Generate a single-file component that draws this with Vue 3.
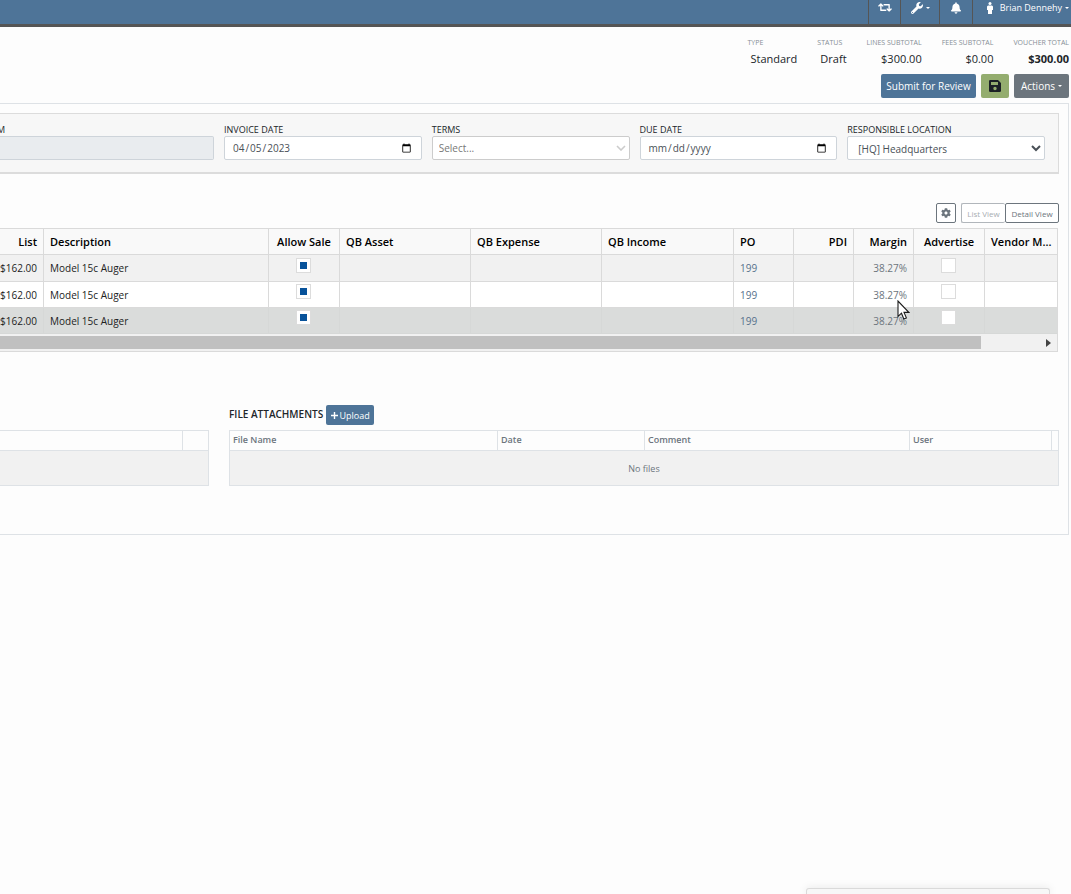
<script setup>
import { ref } from 'vue'

const invoiceDate = ref('2023-04-05')
const dueDate = ref('')

const totals = [
  { label: 'TYPE', value: 'Standard', cls: 'type' },
  { label: 'STATUS', value: 'Draft', cls: 'status' },
  { label: 'LINES SUBTOTAL', value: '$300.00', cls: 'lines' },
  { label: 'FEES SUBTOTAL', value: '$0.00', cls: 'fees' },
  { label: 'VOUCHER TOTAL', value: '$300.00', cls: 'voucher' },
]

const columns = [
  { key: 'list', title: 'List', cls: 'right' },
  { key: 'description', title: 'Description', cls: '' },
  { key: 'allow', title: 'Allow Sale', cls: 'center' },
  { key: 'asset', title: 'QB Asset', cls: '' },
  { key: 'expense', title: 'QB Expense', cls: '' },
  { key: 'income', title: 'QB Income', cls: '' },
  { key: 'po', title: 'PO', cls: 'link' },
  { key: 'pdi', title: 'PDI', cls: 'right' },
  { key: 'margin', title: 'Margin', cls: 'right muted' },
  { key: 'advertise', title: 'Advertise', cls: 'center' },
  { key: 'vendor', title: 'Vendor M...', cls: '' },
]

const line = { list: '$162.00', description: 'Model 15c Auger', allow: true, po: '199', margin: '38.27%', advertise: false }
const rows = ref([1, 2, 3].map((id) => ({ id, ...line })))
</script>

<template>
  <div class="page">
    <header class="topbar">
      <button class="nav swap" aria-label="Switch">
        <svg width="14" height="11" viewBox="0 0 640 512"><path fill="#fff" d="M629.657 343.598L528.971 444.284c-9.373 9.372-24.568 9.372-33.941 0L394.343 343.598c-9.373-9.373-9.373-24.569 0-33.941l10.823-10.823c9.562-9.562 25.133-9.340 34.419.492L480 342.118V160H292.451a24.005 24.005 0 0 1-16.971-7.029l-16-16C244.361 121.851 255.069 96 276.451 96H520c13.255 0 24 10.745 24 24v222.118l40.416-42.792c9.285-9.831 24.856-10.054 34.419-.492l10.823 10.823c9.372 9.372 9.372 24.569-.001 33.941zm-265.138 15.431A23.999 23.999 0 0 0 347.548 352H160V169.881l40.416 42.792c9.286 9.831 24.856 10.054 34.419.491l10.822-10.822c9.373-9.373 9.373-24.569 0-33.941L144.971 67.716c-9.373-9.373-24.569-9.373-33.941 0L10.343 168.402c-9.373 9.373-9.373 24.569 0 33.941l10.822 10.822c9.562 9.562 25.133 9.340 34.419-.491L96 169.881V392c0 13.255 10.745 24 24 24h243.549c21.382 0 32.090-25.851 16.970-40.971l-16-16z" /></svg>
      </button>
      <button class="nav tools" aria-label="Tools">
        <svg width="12" height="12" viewBox="0 0 512 512"><path fill="#fff" d="M507.730 109.100c-2.240-9.030-13.540-12.090-20.120-5.510l-74.360 74.360-67.880-11.310-11.310-67.880 74.360-74.360c6.620-6.620 3.430-17.900-5.660-20.160-47.380-11.740-99.550.91-136.580 37.930-39.640 39.640-50.550 97.100-34.050 147.200L18.740 402.760c-24.990 24.990-24.990 65.510 0 90.500 24.990 24.990 65.510 24.990 90.500 0l213.210-213.210c50.120 16.710 107.470 5.680 147.370-34.220 37.070-37.070 49.700-89.320 37.910-136.730zM64 472c-13.250 0-24-10.750-24-24 0-13.260 10.750-24 24-24s24 10.740 24 24c0 13.250-10.750 24-24 24z" /></svg>
        <i class="caret"></i>
      </button>
      <button class="nav bell" aria-label="Notifications">
        <svg width="10" height="12" viewBox="0 0 448 512"><path fill="#fff" d="M224 512c35.320 0 63.970-28.650 63.970-64H160.030c0 35.350 28.650 64 63.970 64zm215.390-149.710c-19.320-20.760-55.470-51.990-55.470-154.290 0-77.700-54.480-139.900-127.940-155.160V32c0-17.670-14.320-32-31.980-32s-31.980 14.330-31.980 32v20.840C118.560 68.100 64.080 130.300 64.080 208c0 102.300-36.150 133.530-55.470 154.290-6 6.450-8.660 14.160-8.610 21.710.11 16.400 12.980 32 32.100 32h383.800c19.120 0 32-15.600 32.100-32 .05-7.550-2.610-15.270-8.610-21.710z" /></svg>
      </button>
      <button class="nav user">
        <svg width="6" height="12" viewBox="0 0 6 12"><circle cx="3" cy="1.500" r="1.500" fill="#fff" /><path d="M1 3.400h4l1 1V8H5v4H1V8H0V4.400z" fill="#fff" /></svg>
        <span>Brian Dennehy</span>
        <i class="caret"></i>
      </button>
    </header>

    <dl class="totals">
      <div v-for="t in totals" :key="t.label" :class="t.cls">
        <dt>{{ t.label }}</dt>
        <dd>{{ t.value }}</dd>
      </div>
    </dl>

    <div class="actions">
      <button class="btn primary">Submit for Review</button>
      <button class="btn save" aria-label="Save">
        <svg width="12" height="12" viewBox="0 0 12 12"><path fill="#1c2126" fill-rule="evenodd" d="M1.300 0H9l3 3v7.700a1.300 1.300 0 0 1-1.300 1.300H1.300A1.300 1.300 0 0 1 0 10.700V1.300A1.300 1.300 0 0 1 1.300 0zM2 2v3h7V2zM6 6.800a1.700 1.700 0 1 0 0 3.400 1.700 1.700 0 0 0 0-3.400z" /></svg>
      </button>
      <button class="btn gray">Actions <i class="caret"></i></button>
    </div>

    <main class="panel">
      <form class="card" @submit.prevent>
        <div class="field">
          <label class="cut" for="memo">M</label>
          <input id="memo" class="control locked" type="text" disabled />
        </div>
        <div class="field">
          <label for="invoice">INVOICE DATE</label>
          <input id="invoice" v-model="invoiceDate" class="control" type="date" />
        </div>
        <div class="field">
          <label for="terms">TERMS</label>
          <div class="pick">
            <select id="terms" class="control terms"><option>Select...</option></select>
            <svg width="10" height="6" viewBox="0 0 10 6"><path d="M1 1l4 4 4-4" fill="none" stroke="#ccc" stroke-width="1.600" /></svg>
          </div>
        </div>
        <div class="field">
          <label for="due">DUE DATE</label>
          <input id="due" v-model="dueDate" class="control" type="date" />
        </div>
        <div class="field">
          <label for="location">RESPONSIBLE LOCATION</label>
          <div class="pick">
            <select id="location" class="control location"><option>[HQ] Headquarters</option></select>
            <svg width="10" height="7" viewBox="0 0 10 7"><path d="M1 1l4 4 4-4" fill="none" stroke="#495057" stroke-width="2" /></svg>
          </div>
        </div>
      </form>

      <div class="views">
        <button class="view gear" aria-label="Settings">
          <svg width="10" height="10" viewBox="0 0 512 512"><path fill="#6c757d" d="M487.400 315.700l-42.600-24.600c4.300-23.200 4.300-47 0-70.200l42.600-24.600c4.900-2.800 7.100-8.600 5.500-14-11.100-35.600-30-67.800-54.700-94.600-3.800-4.100-10-5.100-14.800-2.300L380.800 110c-17.900-15.400-38.500-27.300-60.800-35.100V25.800c0-5.600-3.900-10.500-9.400-11.700-36.700-8.200-74.300-7.800-109.200 0-5.500 1.200-9.400 6.100-9.400 11.700V75c-22.200 7.900-42.800 19.800-60.800 35.100L88.700 85.500c-4.900-2.800-11-1.900-14.800 2.300-24.700 26.700-43.600 58.900-54.700 94.600-1.700 5.400.6 11.200 5.500 14L67.300 221c-4.300 23.200-4.300 47 0 70.200l-42.600 24.600c-4.900 2.800-7.100 8.600-5.500 14 11.100 35.600 30 67.800 54.700 94.600 3.800 4.100 10 5.100 14.800 2.300l42.600-24.600c17.900 15.400 38.500 27.300 60.800 35.100v49.200c0 5.600 3.900 10.500 9.400 11.700 36.700 8.200 74.300 7.800 109.200 0 5.500-1.200 9.400-6.100 9.400-11.700v-49.200c22.200-7.900 42.800-19.800 60.800-35.100l42.600 24.600c4.900 2.800 11 1.900 14.800-2.300 24.700-26.700 43.600-58.900 54.700-94.600 1.500-5.500-.7-11.300-5.600-14.100zM256 336c-44.100 0-80-35.900-80-80s35.900-80 80-80 80 35.900 80 80-35.900 80-80 80z" /></svg>
        </button>
        <div class="group">
          <button class="view off" disabled>List View</button>
          <button class="view">Detail View</button>
        </div>
      </div>

      <section class="gridwrap">
        <table class="lines-table">
          <colgroup><col v-for="c in columns" :key="c.key" :class="'c-' + c.key" /></colgroup>
          <thead>
            <tr><th v-for="c in columns" :key="c.key" :class="c.cls">{{ c.title }}</th></tr>
          </thead>
          <tbody>
            <tr v-for="r in rows" :key="r.id">
              <td v-for="c in columns" :key="c.key" :class="c.cls">
                <input v-if="c.key === 'allow' || c.key === 'advertise'" v-model="r[c.key]" type="checkbox" :aria-label="c.title" />
                <a v-else-if="c.key === 'po'" href="#">{{ r.po }}</a>
                <template v-else>{{ r[c.key] }}</template>
              </td>
            </tr>
          </tbody>
        </table>
        <div class="scroller">
          <div class="thumb"></div>
          <button aria-label="Scroll right"><svg width="5" height="8" viewBox="0 0 5 8"><path d="M0 0l5 4-5 4z" fill="#444" /></svg></button>
        </div>
        <svg class="cursor" width="13" height="20" viewBox="0 0 13 20"><path d="M1 1v15.500l3.500-3.300L6.800 19l2.600-1.100-2.400-5.500h4.800z" fill="#fff" stroke="#1a1a1a" stroke-width="1.100" /></svg>
      </section>

      <div class="bottom">
        <section class="notes">
          <table class="files">
            <thead><tr><th></th><th class="tool"></th></tr></thead>
            <tbody><tr><td colspan="2"></td></tr></tbody>
          </table>
        </section>
        <section>
          <div class="heading">
            <h2>FILE ATTACHMENTS</h2>
            <button class="upload"><svg width="7" height="7" viewBox="0 0 7 7"><path d="M3.500 0v7M0 3.500h7" stroke="#fff" stroke-width="1.400" /></svg>Upload</button>
          </div>
          <table class="files">
            <colgroup><col class="f-name" /><col class="f-date" /><col class="f-comment" /><col class="f-user" /><col class="f-end" /></colgroup>
            <thead><tr><th>File Name</th><th>Date</th><th>Comment</th><th>User</th><th></th></tr></thead>
            <tbody><tr><td colspan="5">No files</td></tr></tbody>
          </table>
        </section>
      </div>
    </main>

    <div class="dock"></div>
  </div>
</template>

<style>
body {
  margin: 0;
  background: #fdfdfd;
  overflow-x: hidden;
}
</style>

<style scoped>
* {
  box-sizing: border-box;
}
.page {
  min-height: 100vh;
  font-family: "Open Sans", "Noto Sans", sans-serif;
  font-size: 11px;
  color: #212529;
  overflow: hidden;
}
button,
input,
select {
  font-family: inherit;
  margin: 0;
}
.topbar {
  display: flex;
  justify-content: flex-end;
  height: 27px;
  background: #4e7498;
  border-bottom: 3px solid #555;
}
.nav {
  display: flex;
  align-items: center;
  justify-content: center;
  gap: 3px;
  height: 24px;
  padding: 0 0 9px;
  border: 0;
  border-left: 1px solid #555;
  background: none;
  color: #fff;
  font-size: 9px;
  white-space: nowrap;
}
.swap { width: 32px; }
.tools { width: 39px; }
.bell { width: 33px; }
.user { width: 99px; justify-content: flex-end; padding-right: 2px; }
.user span { margin-left: 4px; }
.caret {
  display: inline-block;
  border: 2px solid transparent;
  border-top-color: currentColor;
  border-bottom: 0;
}
.totals {
  display: flex;
  justify-content: flex-end;
  gap: 20px;
  margin: 0;
  padding: 10px 2px 0 0;
}
dt {
  font-size: 7px;
  line-height: 12px;
  color: #868e96;
}
dd {
  margin: 0;
  font-size: 11px;
  line-height: 19px;
}
.type dd,
.status dd { padding-left: 3px; }
.lines,
.fees,
.voucher { text-align: right; }
.voucher dd { font-weight: 700; }
.actions {
  display: flex;
  justify-content: flex-end;
  gap: 5px;
  padding: 6px 2px 5px 0;
}
.btn {
  display: flex;
  align-items: center;
  justify-content: center;
  gap: 3px;
  height: 24px;
  padding: 0;
  border: 0;
  border-radius: 2px;
  color: #fff;
  font-size: 10px;
}
.primary { width: 95px; background: #4e7498; }
.save { width: 28px; background: #94ad6f; }
.gray { width: 55px; background: #6c757d; }
.panel {
  margin-right: 2px;
  padding: 9px 9px 48px 0;
  border: 1px solid #dee2e6;
  border-left: 0;
}
.card {
  display: grid;
  grid-template-columns: 214px repeat(4, 1fr);
  gap: 10px;
  padding: 10px 13px 12px 0;
  background: #f7f7f7;
  border: 1px solid #dcdcdc;
  border-left: 0;
  border-bottom-width: 2px;
}
.field { min-width: 0; }
label {
  display: block;
  font-size: 9px;
  line-height: 12px;
}
.cut { text-indent: -3px; }
.control {
  display: block;
  width: 100%;
  height: 24px;
  padding: 0 9px 0 7px;
  border: 1px solid #ced4da;
  border-radius: 2px;
  background: #fff;
  color: #495057;
  font-size: 10px;
}
.control::-webkit-calendar-picker-indicator {
  width: 11px;
  height: 11px;
  padding: 0;
}
.locked {
  border-left: 0;
  border-radius: 0 2px 2px 0;
  background: #e9ecef;
}
.pick { position: relative; }
.pick select { appearance: none; }
.pick svg {
  position: absolute;
  right: 4px;
  top: 9px;
  pointer-events: none;
}
.terms { padding: 0 6px; border-color: #ccc; color: #777; }
.location { padding: 2px 10px 0; }
.views {
  display: flex;
  justify-content: flex-end;
  gap: 5px;
  margin: 29px 0 5px;
}
.group { display: flex; }
.view {
  height: 20px;
  padding: 0;
  width: 54px;
  border: 1px solid #6c757d;
  border-radius: 2px;
  background: #fff;
  color: #6c757d;
  font-size: 8px;
}
.gear { width: 20px; }
.gear svg { display: block; margin: auto; }
.off { width: 44px; border-color: #b1b6bb; border-right: 0; color: #a8adb2; }
.gridwrap {
  position: relative;
  margin-right: 1px;
  border: 1px solid #dadada;
  border-left: 0;
}
table {
  width: 100%;
  table-layout: fixed;
  border-collapse: separate;
  border-spacing: 0;
}
.lines-table th,
.lines-table td {
  padding: 0 6px;
  border-right: 1px solid #dadada;
  border-bottom: 1px solid #dadada;
  text-align: left;
  white-space: nowrap;
  overflow: hidden;
}
.lines-table th {
  height: 26px;
  background: #f9f9f9;
  color: #000;
  font-size: 11px;
  font-weight: 600;
}
.lines-table td {
  height: 26px;
  color: #222;
  font-size: 10px;
}
.lines-table tr > :first-child { padding-left: 0; }
.lines-table tr > :last-child { border-right: 0; }
.lines-table tr > .right { text-align: right; }
.lines-table tr > .center { text-align: center; }
.lines-table td.center { padding-right: 7px; }
.lines-table td.muted { color: #6c757d; }
.lines-table tbody tr:nth-child(1) td { height: 27px; background: #f1f1f1; }
.lines-table tbody tr:nth-child(2) td { background: #fff; }
.lines-table tbody tr:nth-child(3) td { background: #dadcdb; border-color: #d6d8d7; }
.lines-table a { color: #56718c; text-decoration: none; }
.c-list { width: 44px; }
.c-description { width: 225px; }
.c-allow,
.c-advertise { width: 71px; }
.c-asset,
.c-expense { width: 131px; }
.c-income { width: 132px; }
.c-po,
.c-pdi,
.c-margin { width: 60px; }
input[type="checkbox"] {
  appearance: none;
  display: block;
  width: 15px;
  height: 15px;
  margin: 0 auto 6px;
  border: 1px solid #dcdcdc;
  background: #fff;
}
input[type="checkbox"]:checked {
  background: #07529a content-box;
  padding: 3px;
  box-shadow: inset 0 0 0 3px #fff;
}
.scroller {
  display: flex;
  align-items: center;
  height: 17px;
  padding-right: 6px;
  background: #f1f1f1;
}
.thumb {
  flex: 1;
  height: 13px;
  margin-right: 65px;
  background: #c0c0c0;
}
.scroller button {
  display: flex;
  padding: 0;
  border: 0;
  background: none;
}
.cursor {
  position: absolute;
  left: 897px;
  top: 71px;
}
.bottom {
  display: grid;
  grid-template-columns: 209px 1fr;
  gap: 20px;
  align-items: end;
  margin-top: 53px;
}
.heading {
  display: flex;
  align-items: center;
  gap: 3px;
  height: 20px;
  margin-bottom: 5px;
}
h2 {
  margin: 0;
  padding-bottom: 3px;
  font-size: 10px;
  font-weight: 600;
}
.upload {
  display: flex;
  align-items: center;
  justify-content: center;
  gap: 2px;
  width: 48px;
  height: 20px;
  padding: 0;
  border: 0;
  border-radius: 2px;
  background: #4e7498;
  color: #fff;
  font-size: 9px;
}
.files {
  border: 1px solid #dee2e6;
}
.notes .files { border-left: 0; }
.files th {
  height: 20px;
  padding: 0 3px 2px;
  border-bottom: 1px solid #dee2e6;
  border-right: 1px solid #dee2e6;
  color: #6c757d;
  font-size: 9px;
  font-weight: 600;
  text-align: left;
}
.files th:last-child { border-right: 0; }
.files td {
  height: 34px;
  padding: 0;
  background: #f1f1f1;
  color: #6c757d;
  font-size: 9px;
  text-align: center;
}
.files .tool { width: 25px; }
.f-name { width: 268px; }
.f-date { width: 147px; }
.f-comment { width: 265px; }
.f-end { width: 6px; }
.dock {
  position: fixed;
  right: 21px;
  bottom: 0;
  width: 244px;
  height: 6px;
  border: 1px solid #dadada;
  border-bottom: 0;
  border-radius: 3px 3px 0 0;
  background: #f7f7f7;
  box-shadow: 0 0 8px rgba(0, 0, 0, 0.1);
}
</style>
